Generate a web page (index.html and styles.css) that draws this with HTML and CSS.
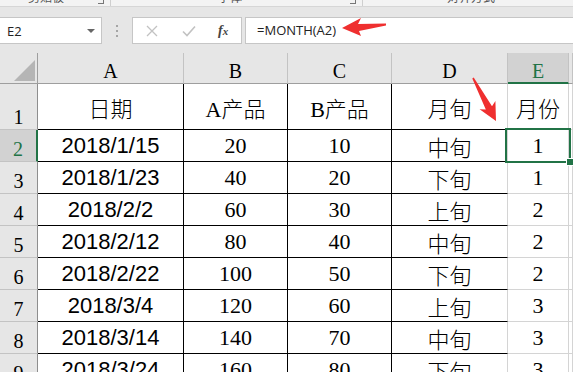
FILE: index.html
```html
<!DOCTYPE html>
<html lang="zh">
<head>
    <meta charset="UTF-8">
    <title>月份 - Excel</title>
    <link rel="stylesheet" href="styles.css">
</head>
<body>
    <div class="ribbon">
        <div class="group group-clip"><span class="group-label">剪贴板</span><span class="launcher"></span></div>
        <div class="group group-font"><span class="group-label">字体</span><span class="launcher"></span></div>
        <div class="group group-align"><span class="group-label">对齐方式</span></div>
    </div>

    <div class="formula-row">
        <div class="name-box">
            <span>E2</span>
            <span class="drop"></span>
        </div>
        <div class="grip"><i></i><i></i><i></i></div>
        <div class="fx-box">
            <svg class="btn-icon" width="12" height="12" viewBox="0 0 12 12">
                <path d="M1 1 L11 11 M11 1 L1 11" stroke="#c2c2c2" stroke-width="1.3" fill="none"/>
            </svg>
            <svg class="btn-icon" width="14" height="12" viewBox="0 0 14 12">
                <path d="M1 6.5 L5 10.5 L13 1.5" stroke="#c2c2c2" stroke-width="1.6" fill="none"/>
            </svg>
            <span class="fx">f<small>x</small></span>
        </div>
        <div class="formula-input">=MONTH(A2)</div>
    </div>

    <div class="sheet">
        <div class="hd corner"><span class="tri"></span></div>
        <div class="hd">A</div>
        <div class="hd">B</div>
        <div class="hd">C</div>
        <div class="hd">D</div>
        <div class="hd hd-active">E</div>
        <div class="hd"></div>

        <div class="rh">1</div>
        <div class="cell cjk">日期</div>
        <div class="cell cjk">A产品</div>
        <div class="cell cjk">B产品</div>
        <div class="cell last cjk">月旬</div>
        <div class="cell plain cjk">月份</div>
        <div class="cell plain"></div>

        <div class="rh rh-active">2</div>
        <div class="cell date">2018/1/15</div>
        <div class="cell num">20</div>
        <div class="cell num">10</div>
        <div class="cell last cjk">中旬</div>
        <div class="cell plain num selected">1<span class="sel-box"><span class="handle"></span></span></div>
        <div class="cell plain"></div>

        <div class="rh">3</div>
        <div class="cell date">2018/1/23</div>
        <div class="cell num">40</div>
        <div class="cell num">20</div>
        <div class="cell last cjk">下旬</div>
        <div class="cell plain num">1</div>
        <div class="cell plain"></div>

        <div class="rh">4</div>
        <div class="cell date">2018/2/2</div>
        <div class="cell num">60</div>
        <div class="cell num">30</div>
        <div class="cell last cjk">上旬</div>
        <div class="cell plain num">2</div>
        <div class="cell plain"></div>

        <div class="rh">5</div>
        <div class="cell date">2018/2/12</div>
        <div class="cell num">80</div>
        <div class="cell num">40</div>
        <div class="cell last cjk">中旬</div>
        <div class="cell plain num">2</div>
        <div class="cell plain"></div>

        <div class="rh">6</div>
        <div class="cell date">2018/2/22</div>
        <div class="cell num">100</div>
        <div class="cell num">50</div>
        <div class="cell last cjk">下旬</div>
        <div class="cell plain num">2</div>
        <div class="cell plain"></div>

        <div class="rh">7</div>
        <div class="cell date">2018/3/4</div>
        <div class="cell num">120</div>
        <div class="cell num">60</div>
        <div class="cell last cjk">上旬</div>
        <div class="cell plain num">3</div>
        <div class="cell plain"></div>

        <div class="rh">8</div>
        <div class="cell date">2018/3/14</div>
        <div class="cell num">140</div>
        <div class="cell num">70</div>
        <div class="cell last cjk">中旬</div>
        <div class="cell plain num">3</div>
        <div class="cell plain"></div>

        <div class="rh">9</div>
        <div class="cell date">2018/3/24</div>
        <div class="cell num">160</div>
        <div class="cell num">80</div>
        <div class="cell last cjk">下旬</div>
        <div class="cell plain num">3</div>
        <div class="cell plain"></div>
    </div>

    <!-- red annotation arrows drawn over the sheet -->
    <svg class="arrows" width="573" height="372" viewBox="0 0 573 372">
        <polygon points="342,28 361,18 358,24 386,23.5 386,25.5 359,31 361,36" fill="#ef2f2f"/>
        <polygon points="496,121 479.6,109.3 485.8,109.4 472.3,78.4 473.7,77.6 492,106.2 495.4,100.9" fill="#ef2f2f"/>
    </svg>
</body>
</html>
```

FILE: styles.css
```css
body {
    margin: 0;
    width: 573px;
    height: 372px;
    overflow: hidden;
    position: relative;
    background-color: #fff;
    font-family: "Open Sans", "Liberation Sans", sans-serif;
    color: #000;
}

/* ribbon group captions, cut off at the top */
.ribbon {
    display: flex;
    height: 6px;
    overflow: hidden;
    background-color: #f3f3f3;
    border-bottom: 1px solid #d6d6d6;
}
.group {
    display: flex;
    height: 6px;
    border-right: 1px solid #cfcfcf;
    box-sizing: border-box;
}
.group-clip { width: 111px; }
.group-font { width: 252px; }
.group-align { flex: 1; border-right: none; }
.group-label {
    font-family: "Noto Sans CJK SC", sans-serif;
    font-size: 12px;
    line-height: 14px;
    margin-top: -10px;
    color: #555;
}
.group-clip .group-label { margin-left: 28px; }
.group-font .group-label { margin-left: 107px; }
.group-align .group-label { margin-left: 84px; }
.launcher {
    margin-left: auto;
    margin-right: 6px;
    width: 5px;
    height: 3px;
    border-right: 1px solid #777;
    border-bottom: 1px solid #777;
}

/* name box + formula bar */
.formula-row {
    display: flex;
    align-items: flex-start;
    height: 46px;
    padding-top: 10px;
    box-sizing: border-box;
    background-color: #e6e6e6;
}
.name-box {
    width: 102px;
    height: 27px;
    box-sizing: border-box;
    background-color: #fff;
    border: 1px solid #c6c6c6;
    border-left: none;
    display: flex;
    align-items: center;
    padding-left: 7px;
    font-size: 13px;
    color: #222;
}
.drop {
    margin-left: auto;
    margin-right: 6px;
    width: 0;
    height: 0;
    border-left: 4px solid transparent;
    border-right: 4px solid transparent;
    border-top: 4px solid #666;
}
.grip {
    width: 30px;
    height: 27px;
    display: flex;
    flex-direction: column;
    align-items: center;
    justify-content: center;
    gap: 3px;
}
.grip i {
    display: block;
    width: 2px;
    height: 2px;
    background-color: #a5a5a5;
}
.fx-box {
    width: 110px;
    height: 27px;
    box-sizing: border-box;
    background-color: #fff;
    border: 1px solid #c6c6c6;
    display: flex;
    align-items: center;
    padding-left: 13px;
    gap: 24px;
}
.fx {
    font-family: "Liberation Serif", serif;
    font-style: italic;
    font-weight: bold;
    font-size: 14px;
    color: #444;
    margin-left: -2px;
}
.fx small {
    font-size: 11px;
}
.formula-input {
    flex: 1;
    margin-left: 3px;
    height: 27px;
    box-sizing: border-box;
    background-color: #fff;
    border: 1px solid #c6c6c6;
    border-right: none;
    padding-left: 11px;
    font-size: 13px;
    line-height: 25px;
    color: #222;
}

/* worksheet grid */
.sheet {
    display: grid;
    grid-template-columns: 38px 146px 104px 104px 116px 61px 1fr;
    grid-template-rows: 31px 46px repeat(8, 32px);
}
.hd,
.rh,
.cell {
    box-sizing: border-box;
    display: flex;
    justify-content: center;
}
.hd {
    align-items: flex-end;
    background-color: #e6e6e6;
    border-right: 1px solid #c3c3c3;
    border-bottom: 1px solid #9e9e9e;
    font-family: "Liberation Serif", serif;
    font-size: 20px;
    line-height: 23px;
}
.hd-active {
    background-color: #d2d2d2;
    color: #217346;
    border-bottom: 2px solid #217346;
    line-height: 22px;
}
.corner {
    position: relative;
    border-right-color: #9e9e9e;
}
.tri {
    position: absolute;
    right: 2px;
    bottom: 2px;
    width: 0;
    height: 0;
    border-left: 21px solid transparent;
    border-bottom: 21px solid #b5b5b5;
}
.rh {
    align-items: flex-end;
    background-color: #e6e6e6;
    border-right: 1px solid #8e8e8e;
    border-bottom: 1px solid #c3c3c3;
    font-family: "Liberation Serif", serif;
    font-size: 20px;
    line-height: 23px;
}
.rh-active {
    background-color: #d2d2d2;
    color: #217346;
    border-right: 2px solid #217346;
}
.cell {
    align-items: center;
    border-right: 1px solid #000;
    border-bottom: 1px solid #000;
    font-size: 22px;
    white-space: nowrap;
}
.cell.last {
    border-right-color: #d4d4d4;
}
.cell.plain {
    border-right-color: #d4d4d4;
    border-bottom-color: #d4d4d4;
}
.cjk {
    font-family: "Liberation Serif", "Noto Sans CJK SC", serif;
    font-weight: 300;
}
.date {
    font-family: "Liberation Sans", Arial, sans-serif;
}
.num {
    font-family: "Liberation Serif", serif;
}
.selected {
    position: relative;
}
.sel-box {
    position: absolute;
    left: -3px;
    top: -2px;
    width: 66px;
    height: 35px;
    box-sizing: border-box;
    border: 2px solid #217346;
}
.handle {
    position: absolute;
    right: -5px;
    bottom: -5px;
    width: 6px;
    height: 6px;
    background-color: #217346;
    border: 1px solid #fff;
}

.arrows {
    position: absolute;
    top: 0;
    left: 0;
    pointer-events: none;
}
```
